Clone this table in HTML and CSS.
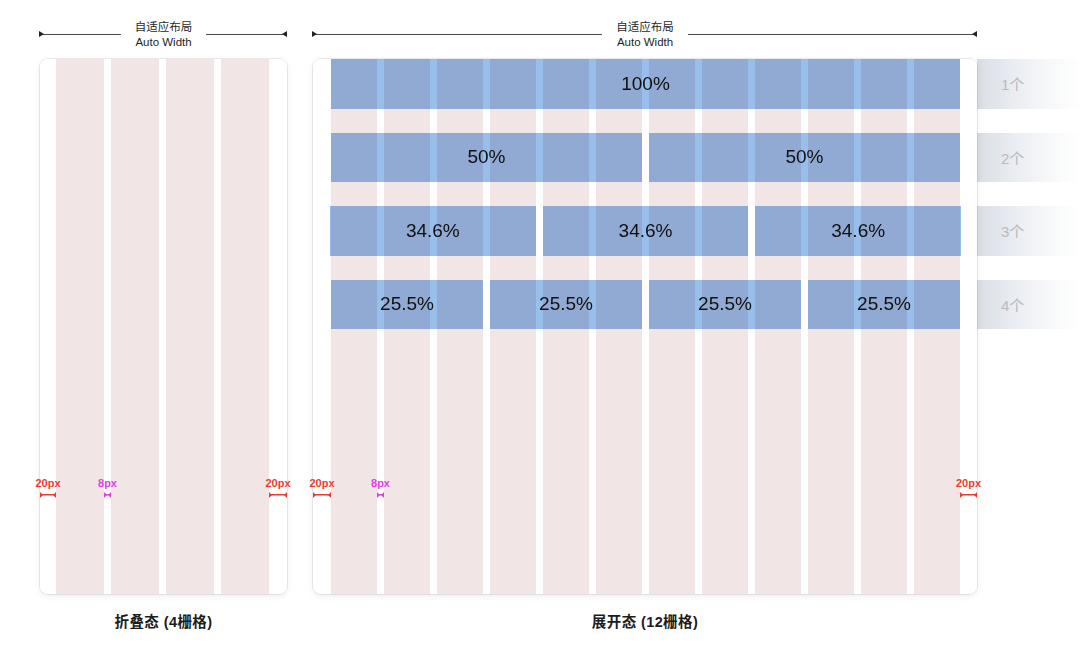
FILE: index.html
```html
<!DOCTYPE html>
<html lang="zh-CN">
<head>
<meta charset="utf-8">
<title>栅格布局</title>
<link rel="stylesheet" href="styles.css">
</head>
<body>
<div class="page">
  <section class="group fold">
    <div class="head">
      <span class="hline hl-left"></span>
      <div class="head-text"><div>自适应布局</div><div>Auto Width</div></div>
      <span class="hline hl-right"></span>
    </div>
    <div class="panel">
      <div class="panel-clip">
        <div class="cols cols-4">
          <div class="col"></div><div class="col"></div><div class="col"></div><div class="col"></div>
        </div>
      </div>
      <div class="dim red dim-l16"><span class="dim-label">20px</span><span class="dim-bar"></span></div>
      <div class="dim pink dim-gut"><span class="dim-label">8px</span><span class="dim-bar"></span></div>
      <div class="dim red dim-r18"><span class="dim-label">20px</span><span class="dim-bar"></span></div>
    </div>
    <div class="caption">折叠态 (4栅格)</div>
  </section>

  <section class="group unfold">
    <div class="head">
      <span class="hline hl-left"></span>
      <div class="head-text"><div>自适应布局</div><div>Auto Width</div></div>
      <span class="hline hl-right"></span>
    </div>
    <div class="panel">
      <div class="panel-clip">
        <div class="cols cols-12">
          <div class="col"></div><div class="col"></div><div class="col"></div><div class="col"></div>
          <div class="col"></div><div class="col"></div><div class="col"></div><div class="col"></div>
          <div class="col"></div><div class="col"></div><div class="col"></div><div class="col"></div>
        </div>
        <div class="bars">
          <div class="bar-row"><div class="bar">100%</div></div>
          <div class="bar-row"><div class="bar">50%</div><div class="bar">50%</div></div>
          <div class="bar-row wide"><div class="bar">34.6%</div><div class="bar">34.6%</div><div class="bar">34.6%</div></div>
          <div class="bar-row"><div class="bar">25.5%</div><div class="bar">25.5%</div><div class="bar">25.5%</div><div class="bar">25.5%</div></div>
        </div>
      </div>
      <div class="dim red dim-l18"><span class="dim-label">20px</span><span class="dim-bar"></span></div>
      <div class="dim pink dim-gut"><span class="dim-label">8px</span><span class="dim-bar"></span></div>
      <div class="dim red dim-r17"><span class="dim-label">20px</span><span class="dim-bar"></span></div>
    </div>
    <div class="caption">展开态 (12栅格)</div>
  </section>

  <aside class="tags">
    <div class="tag">1个</div>
    <div class="tag">2个</div>
    <div class="tag">3个</div>
    <div class="tag">4个</div>
  </aside>
</div>
</body>
</html>
```

FILE: styles.css
```css
* { box-sizing: border-box; }
html, body {
  margin: 0;
  padding: 0;
  background: #ffffff;
}
body {
  width: 1080px;
  height: 647px;
  overflow: hidden;
  font-family: "Liberation Sans", "Noto Sans CJK SC", sans-serif;
  color: #1e1e1e;
}
.page {
  display: flex;
  align-items: flex-start;
  padding-left: 40px;
}
.group {
  display: flex;
  flex-direction: column;
}
.fold { width: 247px; margin-right: 26px; }
.unfold { width: 664px; }

/* header */
.head {
  display: flex;
  align-items: center;
  height: 30px;
  margin-top: 20px;
  margin-bottom: 9px;
}
.head-text {
  padding: 0 14px;
  text-align: center;
  font-size: 11.5px;
  line-height: 15px;
  color: #1f1f1f;
  white-space: nowrap;
}
.hline {
  flex: 1;
  height: 7px;
  position: relative;
  background: linear-gradient(#4a4a4a, #4a4a4a) center / 100% 1px no-repeat;
  margin-top: -1px;
}
.hl-left::before {
  content: "";
  position: absolute;
  left: -1px;
  top: 0;
  border-top: 3.5px solid transparent;
  border-bottom: 3.5px solid transparent;
  border-left: 5px solid #222;
}
.hl-right::after {
  content: "";
  position: absolute;
  right: 0;
  top: 0;
  border-top: 3.5px solid transparent;
  border-bottom: 3.5px solid transparent;
  border-right: 5px solid #222;
}

/* panel */
.panel {
  position: relative;
  height: 535px;
  background: #fff;
  border-radius: 8px;
  box-shadow: 0 0 0 1px rgba(0, 0, 0, 0.07), 0 2px 7px rgba(0, 0, 0, 0.08);
}
.panel-clip {
  position: relative;
  height: 100%;
  border-radius: 8px;
  overflow: hidden;
  background: #fff;
  isolation: isolate;
}
.cols {
  display: grid;
  height: 100%;
  column-gap: 7px;
}
.cols-4 {
  grid-template-columns: repeat(4, 1fr);
  padding: 0 18px 0 16px;
}
.cols-12 {
  grid-template-columns: repeat(12, 1fr);
  padding: 0 17px 0 18px;
}
.col { background: #f2e5e5; }

/* bars */
.bars {
  position: absolute;
  top: 0;
  left: 18px;
  right: 17px;
  display: grid;
  grid-template-rows: repeat(4, 49.5px);
  row-gap: 24px;
}
.bar-row {
  display: flex;
  gap: 7px;
}
.bar-row.wide { margin: 0 -1px; }
.bar {
  flex: 1;
  display: flex;
  align-items: center;
  justify-content: center;
  background: #98beec;
  mix-blend-mode: multiply;
  font-size: 19px;
  color: #111;
}

/* dimension marks */
.dim {
  position: absolute;
  top: 418px;
  display: flex;
  flex-direction: column;
  align-items: center;
}
.dim.red { color: #ee3b30; }
.dim.pink { color: #e23de6; }
.dim-label {
  font-size: 11px;
  line-height: 12px;
  font-weight: 700;
  white-space: nowrap;
  margin-bottom: 3px;
}
.dim-bar {
  position: relative;
  width: 100%;
  height: 6px;
  background: linear-gradient(currentColor, currentColor) center / 100% 1.5px no-repeat;
}
.dim-bar::before,
.dim-bar::after {
  content: "";
  position: absolute;
  top: 0;
  border-top: 3px solid transparent;
  border-bottom: 3px solid transparent;
}
.dim-bar::before { left: 0; border-left: 3.5px solid currentColor; }
.dim-bar::after { right: 0; border-right: 3.5px solid currentColor; }

.dim-l16 { left: 0; width: 16px; }
.dim-l18 { left: 0; width: 18px; }
.dim-gut { left: 64px; width: 7px; }
.dim-r18 { right: 0; width: 18px; }
.dim-r17 { right: 0; width: 17px; }

/* captions */
.caption {
  margin-top: 18px;
  text-align: center;
  font-size: 14.5px;
  line-height: 20px;
  font-weight: 700;
  letter-spacing: 0.4px;
  color: #1c1c1c;
}

/* side tags */
.tags {
  width: 103px;
  margin-top: 59px;
  display: grid;
  grid-template-rows: repeat(4, 49.5px);
  row-gap: 24px;
}
.tag {
  display: flex;
  align-items: center;
  padding-left: 24px;
  font-size: 15px;
  color: #b6bac1;
  background: linear-gradient(90deg, #d9dee6 0%, #e9ecf1 35%, #f7f8fa 70%, rgba(255, 255, 255, 0) 100%);
}
```
